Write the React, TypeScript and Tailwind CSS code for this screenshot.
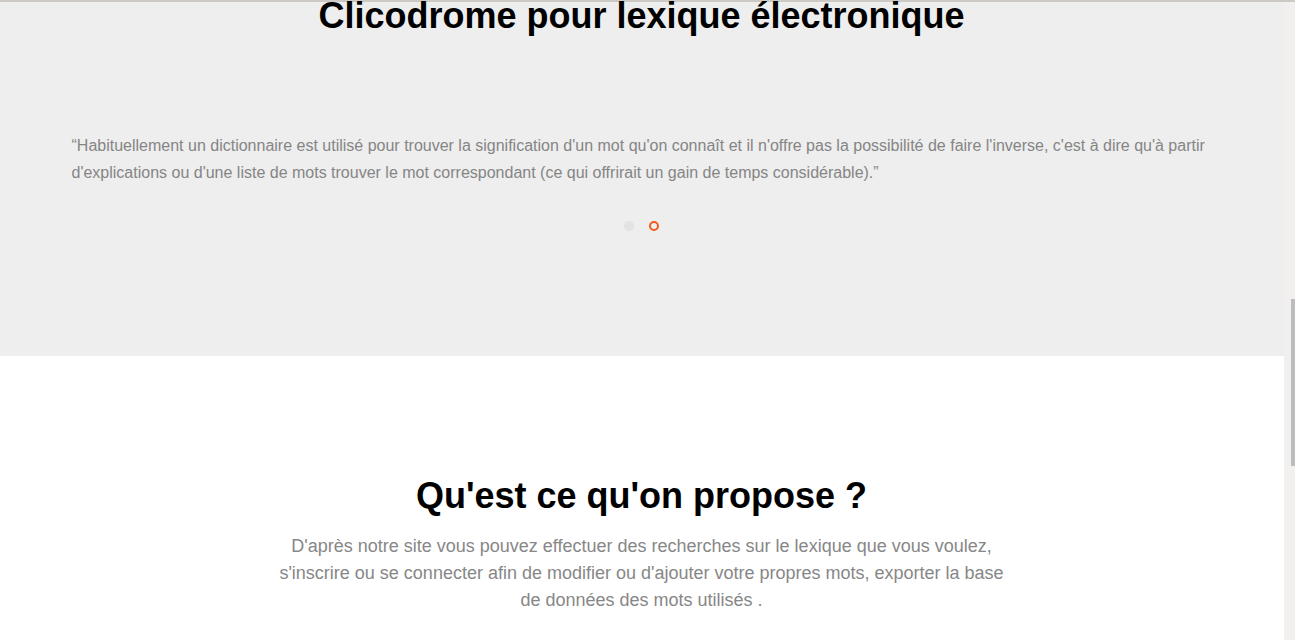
import React from "react";

const Dots: React.FC = () => (
  <div className="flex items-center justify-center gap-[15px] mt-[35px]">
    <span className="w-[10px] h-[10px] rounded-full bg-[#e2e2e2]" />
    <span className="w-[10px] h-[10px] rounded-full border-2 border-[#f25a1b]" />
  </div>
);

export default function App() {
  return (
    <div className="h-[640px] w-full overflow-hidden flex flex-col font-['Liberation_Sans',Arial,sans-serif]">
      {/* top edge */}
      <div className="h-[2px] shrink-0 bg-[#cdc9c5]" />

      <div className="flex flex-1 min-h-0">
        <main className="flex-1 min-w-0">
          {/* Testimonial */}
          <section className="flow-root bg-[#eeeeee] h-[354px] pr-px">
            <h1 className="-mt-[6px] text-center text-[36px] leading-10 font-bold text-black">
              Clicodrome pour lexique électronique
            </h1>
            <div className="max-w-[1140px] mx-auto mt-[96px]">
              <p className="text-[16px] leading-[27px] text-[#858585]">
                “Habituellement un dictionnaire est utilisé pour trouver la signification d'un mot qu'on connaît et il n'offre pas la possibilité de faire l'inverse, c'est à dire qu'à partir d'explications ou d'une liste de mots trouver le mot correspondant (ce qui offrirait un gain de temps considérable).”
              </p>
            </div>
            <Dots />
          </section>

          {/* Proposition */}
          <section className="bg-white pt-[120px] pr-px">
            <h2 className="text-center text-[36px] leading-10 font-bold text-black">
              Qu'est ce qu'on propose ?
            </h2>
            <p className="max-w-[730px] mx-auto mt-[17px] text-center text-[18px] leading-[27px] text-[#878787]">
              D'après notre site vous pouvez effectuer des recherches sur le lexique que vous voulez, s'inscrire ou se connecter afin de modifier ou d'ajouter votre propres mots, exporter la base de données des mots utilisés .
            </p>
          </section>
        </main>

        {/* scrollbar */}
        <div className="w-[11px] shrink-0 bg-[#f1f0ee] flex justify-end pt-[297px]">
          <div className="w-[4px] h-[167px] bg-[#bdbdbd]" />
        </div>
      </div>
    </div>
  );
}
